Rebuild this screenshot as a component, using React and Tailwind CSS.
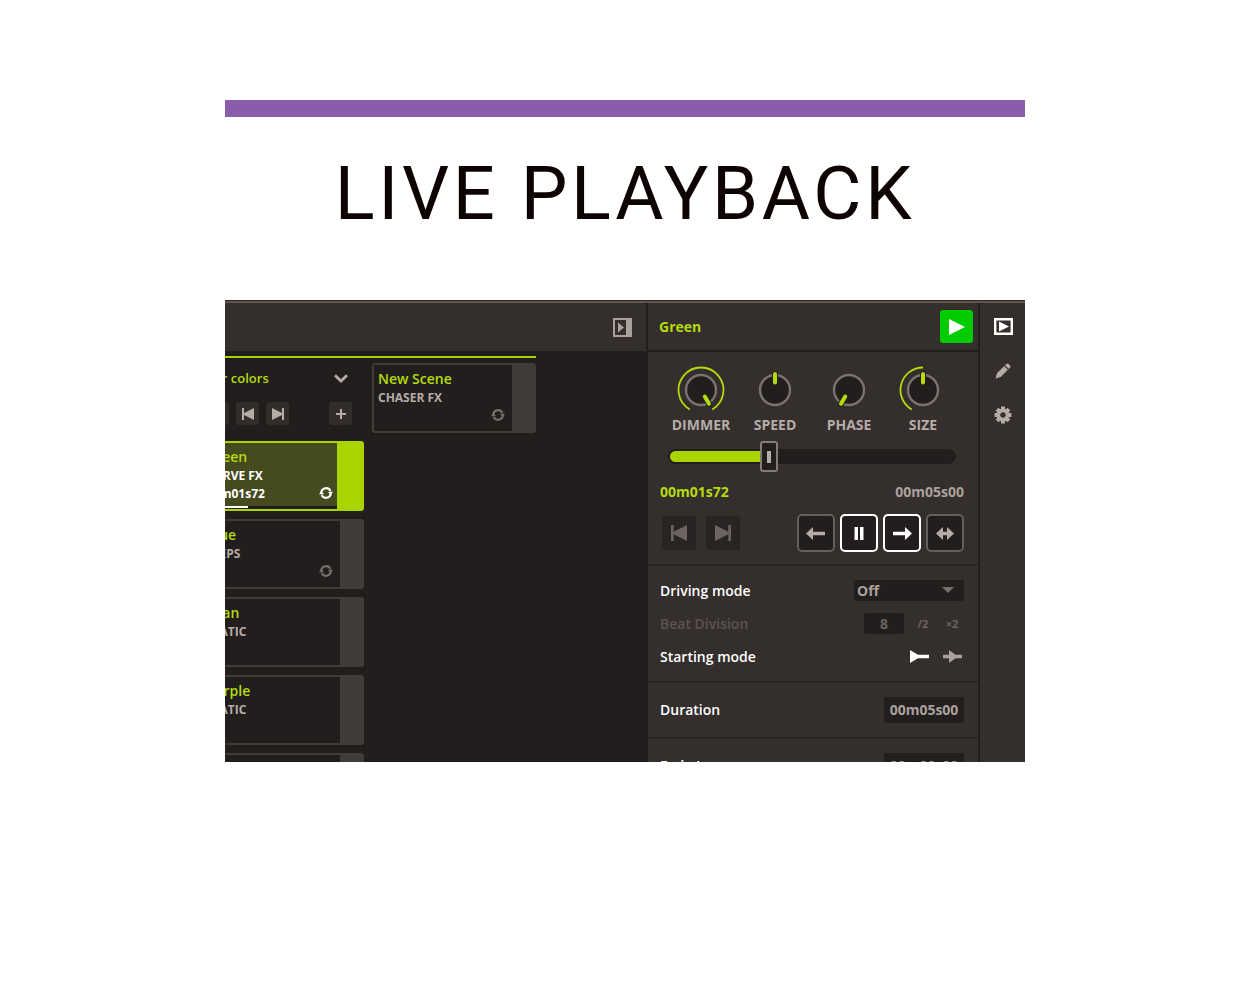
import { useState } from 'react'
import { clsx } from 'clsx'

function RefreshIcon() {
  return (
    <svg viewBox="0 0 14 12" className="h-3 w-3.5" aria-hidden="true">
      <path d="M2.2 5.2A4.9 4.9 0 0 1 11.4 3.9M11.8 6.8A4.9 4.9 0 0 1 2.6 8.1" fill="none" stroke="currentColor" strokeWidth="2.1" />
      <path d="M8.9 4.8H14L11.7 8ZM5.1 7.2H0L2.3 4Z" fill="currentColor" />
    </svg>
  )
}

function SkipIcon({ back, className }) {
  return (
    <svg viewBox="0 0 12 12" className={className} fill="currentColor" aria-hidden="true">
      {back ? <path d="M0 0H2V5L12 0V12L2 7V12H0Z" /> : <path d="M12 0H10V5L0 0V12L10 7V12H12Z" />}
    </svg>
  )
}

const arrows = {
  left: 'M0 7.5L7 1V5.8H19V9.2H7V14Z',
  right: 'M20 7.5L13 1V5.8H1V9.2H13V14Z',
  both: 'M1 7.5L8 1V5.8H12V1L19 7.5L12 14V9.2H8V14Z',
  pause: 'M5.5 1H9V14H5.5ZM11 1H14.5V14H11Z',
}

const transport = [
  { id: 'left', label: 'Play backward', on: false },
  { id: 'pause', label: 'Pause', on: true },
  { id: 'right', label: 'Play forward', on: true },
  { id: 'both', label: 'Bounce', on: false },
]

const scenes = [
  { name: 'Green', type: 'CURVE FX', time: '00m01s72', loop: true, active: true },
  { name: 'Blue', type: 'STEPS', loop: true },
  { name: 'Cyan', type: 'STATIC' },
  { name: 'Purple', type: 'STATIC' },
  { name: 'Orange', type: 'STATIC' },
]

const knobs = [
  { label: 'DIMMER', angle: 150, arc: 'M13.75 44.5A22.5 22.5 0 1 1 36.25 44.5' },
  { label: 'SPEED', angle: 0 },
  { label: 'PHASE', angle: 210 },
  { label: 'SIZE', angle: 0, arc: 'M13.75 44.5A22.5 22.5 0 0 1 25 2.5' },
]

function SceneCard({ scene }) {
  const { name, type, time, loop, active } = scene
  return (
    <article
      className={clsx(
        'flex h-[70px] w-[164px] shrink-0 rounded-[3px] border-2',
        active ? 'border-[#a9d400] bg-[#a9d400]' : 'border-[#423c38] bg-[#423c38]',
      )}
    >
      <div className={clsx('flex flex-1 flex-col', active ? 'bg-[#464a1f]' : 'bg-[#221e1d]')}>
        <div className={clsx('flex flex-1 items-end justify-between pl-1', active ? 'pr-1' : 'pr-[7px]')}>
          <div className="h-full pt-1">
            <h3 className="text-[14px] leading-5 font-semibold text-[#b4dc0c]">{name}</h3>
            <p className={clsx('text-[12px] leading-[18px] font-bold', active ? 'text-white' : 'text-[#b5aca7]')}>
              {type}
            </p>
            {time && <p className="text-[12px] leading-[18px] font-bold text-white">{time}</p>}
          </div>
          {loop && (
            <span className={clsx(active ? 'pb-[7px] text-white' : 'pb-2.5 text-[#77706c]')}>
              <RefreshIcon />
            </span>
          )}
        </div>
        {active && (
          <div className="h-[3px] bg-[#221e1d]">
            <div className="h-0.5 bg-white" style={{ width: '34.4%' }} />
          </div>
        )}
      </div>
      <div className={active ? 'w-[25px]' : 'w-[22px]'} />
    </article>
  )
}

function Knob({ label, angle, arc }) {
  return (
    <div className="flex w-[74px] flex-col items-center">
      <svg viewBox="0 0 50 50" className="size-[50px]" fill="none" aria-hidden="true">
        {arc && <path d={arc} stroke="#b4dc0c" strokeWidth="1.8" />}
        <circle cx="25" cy="25" r="15" fill="#221e1d" stroke="#7b726e" strokeWidth="2.4" />
        <g transform={`rotate(${angle} 25 25)`}>
          <path d="M25 9V17" stroke="#221e1d" strokeWidth="6" strokeLinecap="round" />
          <path d="M25 9V17.5" stroke="#b4dc0c" strokeWidth="4" strokeLinecap="round" />
        </g>
      </svg>
      <span className="text-[14px] leading-5 font-bold text-[#b5aca7]">{label}</span>
    </div>
  )
}

function GroupColumn() {
  return (
    <section className="w-[164px] shrink-0">
      <div className="flex h-[30px] items-center justify-between pr-4 pl-[7px]">
        <h2 className="text-[13px] leading-5 font-semibold text-[#b4dc0c]">For colors</h2>
        <button aria-label="Collapse group" className="text-[#b5aca7]">
          <svg viewBox="0 0 14 9" className="h-[9px] w-3.5" fill="none" stroke="currentColor" strokeWidth="2.8" aria-hidden="true">
            <path d="M1 1.2L7 7L13 1.2" />
          </svg>
        </button>
      </div>
      <div className="mt-[9px] mb-4 flex gap-[7px] pr-3 pl-1.5 text-[#b5aca7]">
        <button aria-label="Play group" className="size-[23px] rounded-[3px] bg-[#322d2b]" />
        <button aria-label="Previous scene" className="grid size-[23px] place-items-center rounded-[3px] bg-[#322d2b]">
          <SkipIcon back className="size-3" />
        </button>
        <button aria-label="Next scene" className="grid size-[23px] place-items-center rounded-[3px] bg-[#322d2b]">
          <SkipIcon className="size-3" />
        </button>
        <button aria-label="Add scene" className="ml-auto grid size-[23px] place-items-center rounded-[3px] bg-[#322d2b]">
          <svg viewBox="0 0 10 10" className="size-2.5" stroke="currentColor" strokeWidth="2" aria-hidden="true">
            <path d="M5 0V10M0 5H10" />
          </svg>
        </button>
      </div>
      <div className="flex flex-col gap-2">
        {scenes.map((scene) => (
          <SceneCard key={scene.name} scene={scene} />
        ))}
      </div>
    </section>
  )
}

function Browser() {
  return (
    <div className="flex min-w-0 flex-1 flex-col bg-[#221e1d]">
      <header className="flex h-12 shrink-0 items-center justify-end bg-[#342e2c] pr-3.5">
        <button aria-label="Toggle side panel" className="text-[#aaa19d]">
          <svg viewBox="0 0 19 19" className="size-[19px]" aria-hidden="true">
            <path d="M0 0H19V19H0ZM2 2V17H13V2Z" fill="currentColor" fillRule="evenodd" />
            <path d="M5 4.5L11 9.5L5 14.5Z" fill="currentColor" />
          </svg>
        </button>
      </header>
      <div className="overflow-hidden pt-[5px]">
        <div className="-ml-[25px] w-[336px] border-t-2 border-[#a9d400]">
          <div className="flex gap-2 pt-[5px]">
            <GroupColumn />
            <SceneCard scene={{ name: 'New Scene', type: 'CHASER FX', loop: true }} />
          </div>
        </div>
      </div>
    </div>
  )
}

function Playback() {
  const [position, setPosition] = useState(34)

  return (
    <section className="w-[334px] shrink-0 border-x-2 border-[#221e1d] bg-[#342e2c]">
      <header className="flex h-[49px] items-center justify-between border-b-2 border-[#221e1d] pr-[5px] pl-[11px]">
        <h2 className="text-[14px] leading-5 font-bold text-[#b4dc0c]">Green</h2>
        <button aria-label="Play" className="grid size-[33px] place-items-center rounded-[3px] bg-[#00cc00] text-white">
          <svg viewBox="0 0 16 16" className="size-4" fill="currentColor" aria-hidden="true">
            <path d="M0 0L16 8L0 16Z" />
          </svg>
        </button>
      </header>

      <div className="border-b-2 border-[#292423] pt-[13px] pr-3.5 pb-3 pl-3">
        <div className="flex justify-center">
          {knobs.map((knob) => (
            <Knob key={knob.label} {...knob} />
          ))}
        </div>

        <div className="relative mx-2 mt-3.5 rounded-full bg-[#221e1d] p-0.5">
          <div className="h-[11px] rounded-l-full bg-[#a9d400]" style={{ width: `${position}%` }} />
          <input
            type="range"
            aria-label="Playback position"
            value={position}
            onChange={(e) => setPosition(Number(e.target.value))}
            className="absolute inset-0 h-full w-full appearance-none bg-transparent [&::-webkit-slider-thumb]:h-[31px] [&::-webkit-slider-thumb]:w-[18px] [&::-webkit-slider-thumb]:appearance-none [&::-webkit-slider-thumb]:rounded-[3px] [&::-webkit-slider-thumb]:border-2 [&::-webkit-slider-thumb]:border-[#857c78] [&::-webkit-slider-thumb]:bg-[#221e1d] [&::-webkit-slider-thumb]:bg-[linear-gradient(#b5aca7,#b5aca7)] [&::-webkit-slider-thumb]:bg-[length:4px_12px] [&::-webkit-slider-thumb]:bg-center [&::-webkit-slider-thumb]:bg-no-repeat"
          />
        </div>

        <div className="mt-[18px] flex justify-between text-[14px] leading-5 font-bold">
          <span className="text-[#b4dc0c]">00m01s72</span>
          <span className="text-[#aaa19d]">00m05s00</span>
        </div>

        <div className="mt-3 flex items-center gap-2.5 pl-0.5">
          <button aria-label="Previous step" className="grid size-[34px] place-items-center rounded-[3px] bg-[#292423] text-[#6b6460]">
            <SkipIcon back className="size-4" />
          </button>
          <button aria-label="Next step" className="grid size-[34px] place-items-center rounded-[3px] bg-[#292423] text-[#6b6460]">
            <SkipIcon className="size-4" />
          </button>
          <div className="ml-auto flex gap-[5px]">
            {transport.map(({ id, label, on }) => (
              <button
                key={id}
                aria-label={label}
                className={clsx(
                  'grid size-[38px] place-items-center rounded-[5px] border-2 bg-[#221e1d]',
                  on ? 'border-white text-white' : 'border-[#655e5a] text-[#b5aca7]',
                )}
              >
                <svg viewBox="0 0 20 15" className="h-[15px] w-5" fill="currentColor" aria-hidden="true">
                  <path d={arrows[id]} />
                </svg>
              </button>
            ))}
          </div>
        </div>
      </div>

      <div className="border-b-2 border-[#292423] py-2 pr-3.5 pl-3 text-[14px] leading-5 font-semibold text-white">
        <div className="flex h-[33px] items-center justify-between">
          <label htmlFor="driving">Driving mode</label>
          <div className="relative flex">
            <select
              id="driving"
              className="h-[21px] w-[110px] appearance-none rounded-[3px] bg-[#221e1d] pl-[3px] leading-5 font-bold text-[#aaa19d]"
            >
              <option>Off</option>
              <option>Beat</option>
            </select>
            <svg viewBox="0 0 12 6" className="pointer-events-none absolute top-[7px] right-2.5 h-1.5 w-3" fill="#77706c" aria-hidden="true">
              <path d="M0 0H12L6 6Z" />
            </svg>
          </div>
        </div>
        <div className="flex h-[33px] items-center text-[#5b5450]">
          <label htmlFor="division" className="mr-auto">Beat Division</label>
          <input
            id="division"
            defaultValue="8"
            className="h-[21px] w-10 rounded-[3px] bg-[#221e1d] text-center font-bold text-[#6b6460]"
          />
          <button className="ml-[11px] w-4 text-[11px] font-bold text-[#6b6460]">/2</button>
          <button className="mr-1 ml-[13px] w-4 text-[11px] font-bold text-[#6b6460]">×2</button>
        </div>
        <div className="flex h-[33px] items-center gap-3.5 pr-0.5">
          <span className="mr-auto">Starting mode</span>
          <button aria-label="Start from beginning">
            <svg viewBox="0 0 19 13" className="h-[13px] w-[19px]" fill="currentColor" aria-hidden="true">
              <path d="M0 0L8 4.8H19V8.2H8L0 13Z" />
            </svg>
          </button>
          <button aria-label="Start from current position" className="text-[#aaa19d]">
            <svg viewBox="0 0 19 13" className="h-[13px] w-[19px]" fill="currentColor" aria-hidden="true">
              <path d="M0 4.8H6V0L12.5 4.8H19V8.2H12.5L6 13V8.2H0Z" />
            </svg>
          </button>
        </div>
      </div>

      <TimeRow id="duration" label="Duration" value="00m05s00" />
      <TimeRow id="fade-in" label="Fade In" value="00m00s00" />
    </section>
  )
}

function TimeRow({ id, label, value }) {
  return (
    <div className="flex h-14 items-center justify-between border-b-2 border-[#292423] pr-3.5 pl-3 text-[14px] leading-5">
      <label htmlFor={id} className="font-semibold text-white">{label}</label>
      <input
        id={id}
        defaultValue={value}
        className="h-[26px] w-20 rounded-[3px] bg-[#221e1d] pb-0.5 text-center font-bold text-[#aaa19d]"
      />
    </div>
  )
}

function Rail() {
  return (
    <nav className="flex w-[45px] shrink-0 flex-col items-center gap-[26px] bg-[#342e2c] pt-3.5 pl-px text-[#b5aca7]">
      <button aria-label="Live playback" className="text-white">
        <svg viewBox="0 0 19 19" className="size-[19px]" aria-hidden="true">
          <path d="M0 1H19V18H0ZM2.4 3.4V15.6H16.6V3.4Z" fill="currentColor" fillRule="evenodd" />
          <path d="M5 4.5L15 9.5L5 14.5Z" fill="currentColor" />
        </svg>
      </button>
      <button aria-label="Edit">
        <svg viewBox="0 0 18 18" className="size-[18px]" fill="currentColor" aria-hidden="true">
          <path d="M1.5 16.5L3 11.3L10.2 4.1L13.9 7.8L6.7 15ZM11.1 3.2L12.3 2Q13.4.9 14.6 2L16 3.4Q17.1 4.6 16 5.7L14.8 6.9Z" />
        </svg>
      </button>
      <button aria-label="Settings">
        <svg viewBox="-9 -9 18 18" className="size-[18px]" aria-hidden="true">
          <circle r="4.6" fill="none" stroke="currentColor" strokeWidth="3.6" />
          {[0, 45, 90, 135].map((angle) => (
            <path
              key={angle}
              d="M-2 -8.4H2V-5H-2ZM-2 5H2V8.4H-2Z"
              fill="currentColor"
              transform={`rotate(${angle})`}
            />
          ))}
        </svg>
      </button>
    </nav>
  )
}

export default function App() {
  return (
    <main className="mx-auto max-w-[800px] pt-[100px] font-['Open_Sans',sans-serif]">
      <div className="h-[17px] bg-[#8b5cab]" />
      <h1 className="pt-8 pb-[61px] text-center font-[Roboto,sans-serif] text-[74px] leading-[90px] font-normal tracking-wider text-[#0d0303]">
        LIVE PLAYBACK
      </h1>
      <div className="flex aspect-[400/231] overflow-hidden border-t border-[#2b2523] bg-[#5c5551] pt-0.5">
        <Browser />
        <Playback />
        <Rail />
      </div>
    </main>
  )
}
